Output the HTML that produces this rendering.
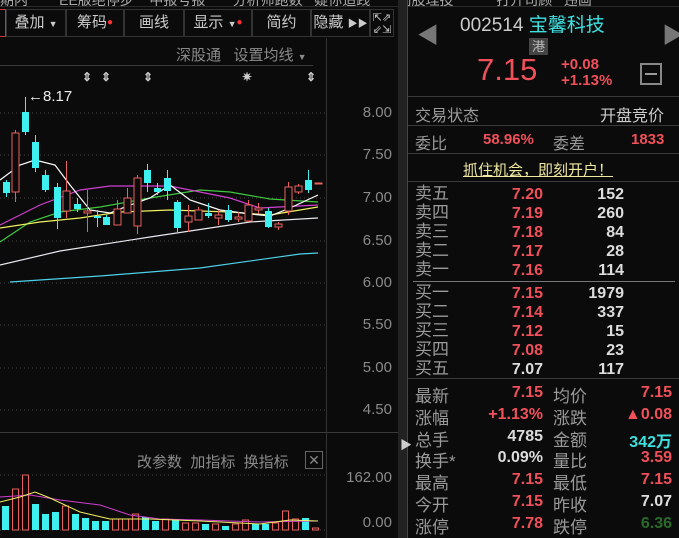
<!DOCTYPE html>
<html><head><meta charset="utf-8"><style>
*{margin:0;padding:0;box-sizing:border-box}
body{width:679px;height:538px;background:#0b0b0b;overflow:hidden;position:relative;font-family:"Liberation Sans","Noto Sans CJK SC",sans-serif;color:#bbb}
.a{position:absolute;white-space:nowrap}
.tb{position:absolute;top:9px;height:28px;border:1px solid #333;color:#ccc;font-size:15px;line-height:26px;text-align:center}
.ax{position:absolute;left:350px;width:42px;text-align:right;color:#8a8a8a;font-size:15px}
.r{color:#f0505a;font-weight:bold}
.w{color:#ddd;font-weight:bold}
.c{color:#3fe0e0;font-weight:bold}
.g{color:#2a6a2a;font-weight:bold}
.lb{color:#9a9a9a;font-size:16px}
.hl{position:absolute;height:1px;background:#3a3a3a}
</style></head><body>
<div class="a" style="left:0;top:-10px;font-size:14px;color:#aaa">期内 &nbsp; &nbsp; &nbsp; &nbsp;EE版绝停步 &nbsp; &nbsp;中报号报 &nbsp; &nbsp; &nbsp; 分析师跑数 &nbsp; 疑你追践 &nbsp; &nbsp; &nbsp; 向股理投 &nbsp; &nbsp; &nbsp; &nbsp; &nbsp; 打开司顾 &nbsp; 违画</div>
<div class="hl" style="left:0;top:6px;width:679px;background:#2a2a2a"></div>
<div class="tb" style="left:-10px;width:16px;border-color:#c33"></div>
<div class="tb" style="left:6px;width:60px">叠加 <span style="font-size:9px">▼</span></div>
<div class="tb" style="left:66px;width:58px">筹码<span style="color:#f33;font-size:10px;vertical-align:top">●</span></div>
<div class="tb" style="left:124px;width:60px">画线</div>
<div class="tb" style="left:184px;width:68px">显示 <span style="font-size:9px">▼</span><span style="color:#f33;font-size:10px;vertical-align:top">●</span></div>
<div class="tb" style="left:252px;width:59px">简约</div>
<div class="tb" style="left:311px;width:59px">隐藏 <span style="font-size:10px">▶▶</span></div>
<div class="tb" style="left:370px;width:24px;font-size:11px;line-height:12px;padding-top:2px">⇱⇗<br>⇙⇲</div>
<div class="a" style="left:176px;top:44px;font-size:15px;color:#8a8a8a">深股通 &nbsp; 设置均线 <span style="font-size:9px">▼</span></div>
<div class="hl" style="left:0;top:65px;width:313px"></div>
<div class="a" style="left:0;top:70px;color:#ccc;font-size:12px;font-weight:bold">
<span class="a" style="left:82px">⇕</span><span class="a" style="left:101px">⇕</span><span class="a" style="left:143px">⇕</span><span class="a" style="left:242px">✷</span><span class="a" style="left:306px">⇕</span></div>
<div class="a" style="left:28px;top:88px;color:#eee;font-size:15px">←8.17</div>
<div style="position:absolute;left:326px;top:38px;width:1px;height:500px;background:#333"></div>
<div style="position:absolute;left:398px;top:0;width:10px;height:538px;background:#222;border-right:1px solid #444"></div>
<div class="a" style="left:400px;top:436px;color:#ccc;font-size:12px">▶</div>
<div class="hl" style="left:0;top:432px;width:398px"></div>
<div class="ax" style="top:104px">8.00</div><div class="ax" style="top:146px">7.50</div><div class="ax" style="top:189px">7.00</div><div class="ax" style="top:232px">6.50</div><div class="ax" style="top:274px">6.00</div><div class="ax" style="top:316px">5.50</div><div class="ax" style="top:359px">5.00</div><div class="ax" style="top:401px">4.50</div>
<div class="ax" style="top:469px;left:330px;width:62px">162.00</div><div class="ax" style="top:514px">0.00</div>
<div class="a" style="left:137px;top:451px;font-size:15px;color:#8a8a8a">改参数 &nbsp;加指标 &nbsp;换指标</div>
<div class="a" style="left:305px;top:451px;width:18px;height:18px;border:1px solid #666;color:#888;font-size:14px;line-height:16px;text-align:center">✕</div>
<svg width="330" height="538" style="position:absolute;left:0;top:0">
<g stroke="#444" stroke-dasharray="1,3">
<line x1="0" y1="113" x2="328" y2="113"/><line x1="0" y1="155" x2="328" y2="155"/><line x1="0" y1="198" x2="328" y2="198"/><line x1="0" y1="241" x2="328" y2="241"/><line x1="0" y1="283" x2="328" y2="283"/><line x1="0" y1="325" x2="328" y2="325"/><line x1="0" y1="368" x2="328" y2="368"/><line x1="0" y1="410" x2="328" y2="410"/><line x1="0" y1="475" x2="328" y2="475"/><line x1="0" y1="530" x2="328" y2="530"/>
</g>
<g fill="none" stroke-width="1.2">
<polyline stroke="#4fd0ea" points="10,282 100,276 200,268 300,254 318,253"/>
<polyline stroke="#e8e8f0" points="0,265 60,251 150,237 250,222 318,218"/>
<polyline stroke="#3fc83f" points="0,242 30,222 60,212 100,207 150,198 200,190 230,192 270,199 318,202"/>
<polyline stroke="#d040d0" points="0,225 40,205 80,190 110,186 170,186 230,198 260,208 318,205"/>
<polyline stroke="#f0f060" points="0,228 40,222 80,218 120,212 170,210 230,212 270,215 318,207"/>
<polyline stroke="#ffffff" points="0,180 20,165 35,160 55,165 70,185 90,210 110,213 130,205 150,198 170,185 190,200 220,210 250,214 270,216 290,208 318,195"/>
</g>
<g id="k"></g><g id="v"></g>
</svg>
<script>
var C="#3ff0f0",R="#e8615c",k=[[6,182,193,180,197,C],[15,133,192,130,202,R],[25,112,132,97,135,C],[35,142,168,135,172,C],[45,175,190,170,192,C],[57,187,218,183,229,C],[66,191,211,161,218,R],[77,204,209,198,212,C],[87,211,213,190,232,R],[97,216,218,210,227,C],[106,217,225,215,225,C],[117,209,225,200,225,R],[127,198,213,188,213,R],[137,178,226,175,234,R],[147,170,183,164,192,C],[157,188,192,183,195,C],[167,178,191,170,200,C],[177,202,228,200,232,C],[188,216,222,205,232,R],[198,210,220,207,220,R],[208,213,216,203,218,C],[218,215,218,210,225,R],[228,210,220,205,222,C],[238,217,219,212,222,R],[248,205,221,200,222,R],[258,208,210,203,214,R],[268,211,227,208,228,C],[278,224,227,222,230,R],[288,187,211,182,215,R],[298,186,192,184,194,R],[308,180,190,170,193,C],[318,183,184,183,184,R]];
var s="";k.forEach(function(c){s+='<line x1="'+(c[0]+.5)+'" y1="'+c[3]+'" x2="'+(c[0]+.5)+'" y2="'+c[4]+'" stroke="'+c[5]+'"/>';if(c[5]==C)s+='<rect x="'+(c[0]-3)+'" y="'+c[1]+'" width="7" height="'+Math.max(1,c[2]-c[1])+'" fill="'+C+'"/>';else s+='<rect x="'+(c[0]-3)+'" y="'+c[1]+'" width="7" height="'+Math.max(1,c[2]-c[1])+'" fill="#0b0b0b" stroke="'+R+'"/>';});
document.getElementById("k").innerHTML=s;
var t=[506,489,475,504,514,512,506,514,518,521,521,519,519,514,517,521,519,519,523,523,524,524,526,524,520,524,524,523,511,519,518,528],cc="CRRCCCRCCCCRRRCCRCRRCRCRRCCRRRCR";
s="";t.forEach(function(y,i){var x=2+i*10;s+=cc[i]=="C"?'<rect x="'+x+'" y="'+y+'" width="7" height="'+(530-y)+'" fill="'+C+'"/>':'<rect x="'+(x+.5)+'" y="'+y+'" width="6" height="'+(530-y)+'" fill="none" stroke="'+R+'"/>';});
s+='<polyline fill="none" stroke="#d040d0" points="0,497 30,495 60,500 100,505 130,515 160,519 200,520 260,522 318,521"/><polyline fill="none" stroke="#f0f060" points="0,502 20,497 35,492 50,498 80,512 110,519 150,519 200,521 260,524 290,520 318,521"/>';
document.getElementById("v").innerHTML=s;
</script>
<div class="a" style="left:417px;top:18px;color:#777;font-size:22px">◀</div>
<div class="a" style="left:662px;top:18px;color:#777;font-size:22px">▶</div>
<div class="a" style="left:460px;top:10px;font-size:19px;color:#ccc">002514 <span style="color:#3fe0e0">宝馨科技</span></div>
<div class="a" style="left:529px;top:38px;width:19px;height:17px;background:#444;color:#bbb;font-size:13px;text-align:center;line-height:17px">港</div>
<div class="a" style="left:477px;top:52px;font-size:31px;color:#f0505a">7.15</div>
<div class="a r" style="left:561px;top:57px;font-size:15px;line-height:16px">+0.08<br>+1.13%</div>
<div class="a" style="left:640px;top:63px;width:22px;height:22px;border:2px solid #888;"><div style="margin:8px 3px;height:2px;background:#999"></div></div>
<div class="hl" style="left:408px;top:96px;width:271px"></div>
<div class="a lb" style="left:415px;top:102px">交易状态</div><div class="a" style="left:600px;top:102px;font-size:16px;color:#ccc">开盘竞价</div>
<div class="hl" style="left:408px;top:125px;width:271px"></div>
<div class="a lb" style="left:415px;top:130px">委比</div><div class="a r" style="left:483px;top:131px;font-size:15px">58.96%</div>
<div class="a lb" style="left:553px;top:130px">委差</div><div class="a r" style="left:631px;top:131px;font-size:15px">1833</div>
<div class="hl" style="left:408px;top:153px;width:271px"></div>
<div class="a" style="left:463px;top:159px;font-size:15px;color:#eee8a0;text-decoration:underline">抓住机会，即刻开户！</div>
<div class="hl" style="left:408px;top:181px;width:271px"></div>
<div id="ob"></div>
<div class="hl" style="left:413px;top:281px;width:262px;background:#777"></div>
<div class="hl" style="left:408px;top:378px;width:271px"></div>
<div id="st"></div>
<script>
var o=[["卖五","7.20","152"],["卖四","7.19","260"],["卖三","7.18","84"],["卖二","7.17","28"],["卖一","7.16","114"],["买一","7.15","1979"],["买二","7.14","337"],["买三","7.12","15"],["买四","7.08","23"],["买五","7.07","117"]],s="";
o.forEach(function(r,i){var y=184+i*19.1+(i>4?3:0);s+='<div class="a lb" style="left:415px;top:'+y+'px;font-size:17px;line-height:20px">'+r[0]+'</div><div class="a '+(i==9?'w':'r')+'" style="left:490px;width:53px;text-align:right;top:'+(y+1)+'px;font-size:16px;line-height:20px">'+r[1]+'</div><div class="a w" style="left:570px;width:54px;text-align:right;top:'+(y+1)+'px;font-size:16px;line-height:20px">'+r[2]+'</div>';});
document.getElementById("ob").innerHTML=s;
var q=[["最新","7.15","r","均价","7.15","r"],["涨幅","+1.13%","r","涨跌","▲0.08","r"],["总手","4785","w","金额","342万","c"],["换手*","0.09%","w","量比","3.59","r"],["最高","7.15","r","最低","7.15","r"],["今开","7.15","r","昨收","7.07","w"],["涨停","7.78","r","跌停","6.36","g"]];s="";
q.forEach(function(r,i){var y=382+i*21.8;
s+='<div class="a lb" style="left:415px;top:'+y+'px;font-size:17px">'+r[0]+'</div><div class="a '+r[2]+'" style="left:470px;width:73px;text-align:right;top:'+(y+2)+'px;font-size:16px">'+r[1]+'</div><div class="a lb" style="left:553px;top:'+y+'px;font-size:17px">'+r[3]+'</div><div class="a '+r[5]+'" style="left:600px;width:72px;text-align:right;top:'+(y+2)+'px;font-size:16px">'+r[4]+'</div>';});
document.getElementById("st").innerHTML=s;
</script>
</body></html>
